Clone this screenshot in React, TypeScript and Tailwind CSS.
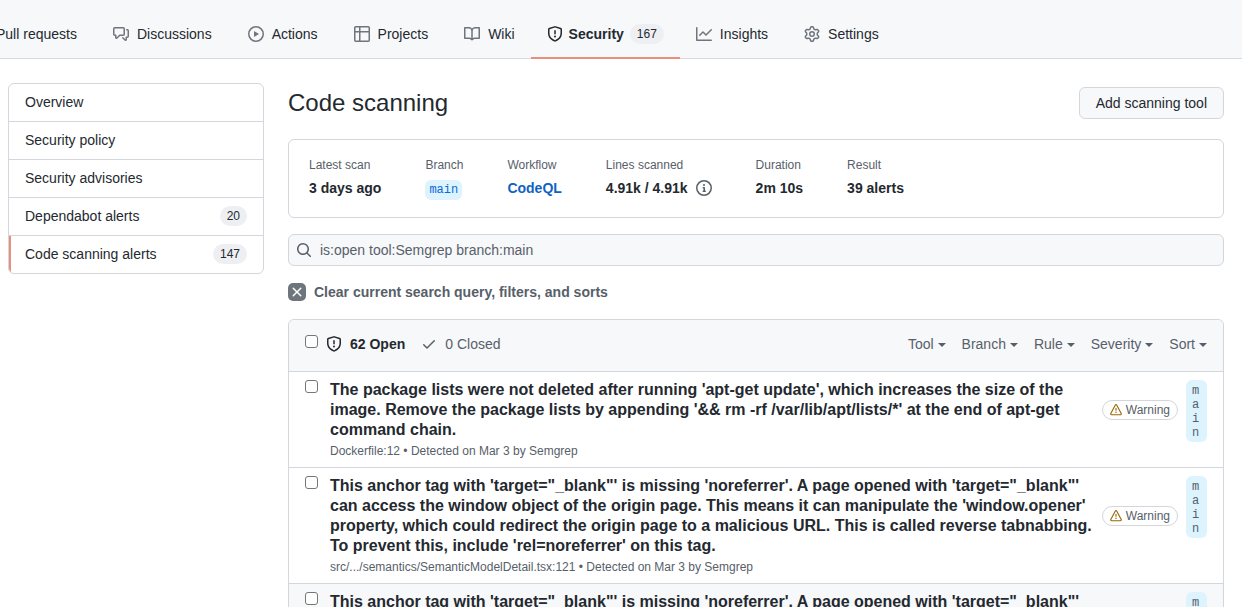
import React from "react";

const icons = {
  discussion:
    "M1.5 2.75a.25.25 0 01.25-.25h8.5a.25.25 0 01.25.25v5.5a.25.25 0 01-.25.25h-3.5a.75.75 0 00-.53.22L3.5 11.44V9.25a.75.75 0 00-.75-.75h-1a.25.25 0 01-.25-.25v-5.5zM1.75 1A1.75 1.75 0 000 2.75v5.5C0 9.216.784 10 1.75 10H2v1.543a1.457 1.457 0 002.487 1.03L7.061 10h3.189A1.75 1.75 0 0012 8.25v-5.5A1.75 1.75 0 0010.25 1h-8.5zM14.5 4.75a.25.25 0 00-.25-.25h-.5a.75.75 0 110-1.5h.5c.966 0 1.75.784 1.75 1.75v5.5A1.75 1.75 0 0114.25 12H14v1.543a1.457 1.457 0 01-2.487 1.03L9.22 12.28a.75.75 0 111.06-1.06l2.22 2.22v-2.19a.75.75 0 01.75-.75h1a.25.25 0 00.25-.25v-5.5z",
  play: "M1.5 8a6.5 6.5 0 1113 0 6.5 6.5 0 01-13 0zM8 0a8 8 0 100 16A8 8 0 008 0zM6.379 5.227A.25.25 0 006 5.442v5.117a.25.25 0 00.379.214l4.264-2.559a.25.25 0 000-.428L6.379 5.227z",
  project:
    "M0 1.75C0 .784.784 0 1.75 0h12.5C15.216 0 16 .784 16 1.75v3.585a.746.746 0 010 .83v8.085A1.75 1.75 0 0114.25 16H6.309a.748.748 0 01-1.118 0H1.75A1.75 1.75 0 010 14.25V6.165a.746.746 0 010-.83V1.75zM1.5 6.5v7.75c0 .138.112.25.25.25H5v-8H1.5zM5 5H1.5V1.75a.25.25 0 01.25-.25H5V5zm1.5 1.5v8h7.75a.25.25 0 00.25-.25V6.5h-8zm8-1.5h-8V1.5h7.75a.25.25 0 01.25.25V5z",
  book: "M0 1.75A.75.75 0 01.75 1h4.253c1.227 0 2.317.59 3 1.501A3.744 3.744 0 0111.006 1h4.245a.75.75 0 01.75.75v10.5a.75.75 0 01-.75.75h-4.507a2.25 2.25 0 00-1.591.659l-.622.621a.75.75 0 01-1.06 0l-.622-.621A2.25 2.25 0 005.258 13H.75a.75.75 0 01-.75-.75V1.75zm8.755 3a2.25 2.25 0 012.25-2.25H14.5v9h-3.757c-.71 0-1.4.201-1.992.572l.004-7.322zm-1.504 7.324l.004-5.073-.002-2.253A2.25 2.25 0 005.003 2.5H1.5v9h3.757a3.75 3.75 0 011.994.574z",
  shield:
    "M7.467.133a1.75 1.75 0 011.066 0l5.25 1.68A1.75 1.75 0 0115 3.48V7c0 1.566-.32 3.182-1.303 4.682-.983 1.498-2.585 2.813-5.032 3.855a1.7 1.7 0 01-1.33 0c-2.447-1.042-4.049-2.357-5.032-3.855C1.32 10.182 1 8.566 1 7V3.48a1.75 1.75 0 011.217-1.667l5.25-1.68zm.61 1.429a.25.25 0 00-.153 0l-5.25 1.68a.25.25 0 00-.174.238V7c0 1.358.275 2.666 1.057 3.86.784 1.194 2.121 2.34 4.366 3.297a.2.2 0 00.154 0c2.245-.956 3.582-2.104 4.366-3.298C13.225 9.666 13.5 8.36 13.5 7V3.48a.25.25 0 00-.174-.237l-5.25-1.68zM9 10.5a1 1 0 11-2 0 1 1 0 012 0zm-.25-5.75a.75.75 0 10-1.5 0v3a.75.75 0 001.5 0v-3z",
  graph:
    "M1.5 1.75a.75.75 0 00-1.5 0v12.5c0 .414.336.75.75.75h14.5a.75.75 0 000-1.5H1.5V1.75zm14.28 2.53a.75.75 0 00-1.06-1.06L10 7.94 7.53 5.47a.75.75 0 00-1.06 0L3.22 8.72a.75.75 0 001.06 1.06L7 7.06l2.47 2.47a.75.75 0 001.06 0l5.25-5.25z",
  gear: "M7.429 1.525a6.593 6.593 0 011.142 0c.036.003.108.036.137.146l.289 1.105c.147.56.55.967.997 1.189.174.086.341.183.501.29.417.278.97.423 1.53.27l1.102-.303c.11-.03.175.016.195.046.219.31.41.641.573.989.014.031.022.11-.059.19l-.815.806c-.411.406-.562.957-.53 1.456a4.588 4.588 0 010 .582c-.032.499.119 1.05.53 1.456l.815.806c.08.08.073.159.059.19a6.494 6.494 0 01-.573.99c-.02.029-.086.074-.195.045l-1.103-.303c-.559-.153-1.112-.008-1.529.27-.16.107-.327.204-.5.29-.449.222-.851.628-.998 1.189l-.289 1.105c-.029.11-.101.143-.137.146a6.613 6.613 0 01-1.142 0c-.036-.003-.108-.037-.137-.146l-.289-1.105c-.147-.56-.55-.967-.997-1.189a4.502 4.502 0 01-.501-.29c-.417-.278-.97-.423-1.53-.27l-1.102.303c-.11.03-.175-.016-.195-.046a6.492 6.492 0 01-.573-.989c-.014-.031-.022-.11.059-.19l.815-.806c.411-.406.562-.957.53-1.456a4.587 4.587 0 010-.582c.032-.499-.119-1.05-.53-1.456l-.815-.806c-.08-.08-.073-.159-.059-.19a6.44 6.44 0 01.573-.99c.02-.029.086-.075.195-.045l1.103.303c.559.153 1.112.008 1.529-.27.16-.107.327-.204.5-.29.449-.222.851-.628.998-1.189l.289-1.105c.029-.11.101-.143.137-.146zM8 0c-.236 0-.47.01-.701.03-.743.065-1.29.615-1.458 1.261l-.29 1.106c-.017.066-.078.158-.211.224a5.994 5.994 0 00-.668.386c-.123.082-.233.09-.3.071L3.27 2.776c-.644-.177-1.392.02-1.82.63a7.977 7.977 0 00-.704 1.217c-.315.675-.111 1.422.363 1.891l.815.806c.05.048.098.147.088.294a6.084 6.084 0 000 .772c.01.147-.038.246-.088.294l-.815.806c-.474.469-.678 1.216-.363 1.891.2.428.436.835.704 1.218.428.609 1.176.806 1.82.63l1.103-.303c.066-.019.176-.011.299.071.213.143.436.272.668.386.133.066.194.158.212.224l.289 1.106c.169.646.715 1.196 1.458 1.26a8.094 8.094 0 001.402 0c.743-.064 1.29-.614 1.458-1.26l.29-1.106c.017-.066.078-.158.211-.224a5.98 5.98 0 00.668-.386c.123-.082.233-.09.3-.071l1.102.302c.644.177 1.392-.02 1.82-.63.268-.382.505-.789.704-1.217.315-.675.111-1.422-.364-1.891l-.814-.806c-.05-.048-.098-.147-.088-.294a6.1 6.1 0 000-.772c-.01-.147.039-.246.088-.294l.814-.806c.475-.469.679-1.216.364-1.891a7.992 7.992 0 00-.704-1.218c-.428-.609-1.176-.806-1.82-.63l-1.103.303c-.066.019-.176.011-.299-.071a5.991 5.991 0 00-.668-.386c-.133-.066-.194-.158-.212-.224L10.16 1.29C9.99.645 9.444.095 8.701.031A8.094 8.094 0 008 0zm1.5 8a1.5 1.5 0 11-3 0 1.5 1.5 0 013 0zM11 8a3 3 0 11-6 0 3 3 0 016 0z",
  info: "M8 1.5a6.5 6.5 0 100 13 6.5 6.5 0 000-13zM0 8a8 8 0 1116 0A8 8 0 010 8zm6.5-.25A.75.75 0 017.25 7h1a.75.75 0 01.75.75v2.75h.25a.75.75 0 010 1.5h-2a.75.75 0 010-1.5h.25v-2h-.25a.75.75 0 01-.75-.75zM8 6a1 1 0 100-2 1 1 0 000 2z",
  search:
    "M11.5 7a4.499 4.499 0 11-8.998 0A4.499 4.499 0 0111.5 7zm-.82 4.74a6 6 0 111.06-1.06l3.04 3.04a.75.75 0 11-1.06 1.06l-3.04-3.04z",
  x: "M3.72 3.72a.75.75 0 011.06 0L8 6.94l3.22-3.22a.75.75 0 111.06 1.06L9.06 8l3.22 3.22a.75.75 0 11-1.06 1.06L8 9.06l-3.22 3.22a.75.75 0 01-1.06-1.06L6.94 8 3.72 4.78a.75.75 0 010-1.06z",
  check:
    "M13.78 4.22a.75.75 0 010 1.06l-7.25 7.25a.75.75 0 01-1.06 0L2.22 9.28a.75.75 0 011.06-1.06L6 10.94l6.72-6.72a.75.75 0 011.06 0z",
  alert:
    "M8.22 1.754a.25.25 0 00-.44 0L1.698 13.132a.25.25 0 00.22.368h12.164a.25.25 0 00.22-.368L8.22 1.754zm-1.763-.707c.659-1.234 2.427-1.234 3.086 0l6.082 11.378A1.75 1.75 0 0114.082 15H1.918a1.75 1.75 0 01-1.543-2.575L6.457 1.047zM9 11a1 1 0 11-2 0 1 1 0 012 0zm-.25-5.25a.75.75 0 00-1.5 0v2.5a.75.75 0 001.5 0v-2.5z",
};

type IconName = keyof typeof icons;

function Icon({ name, className = "size-4" }: { name: IconName; className?: string }) {
  return (
    <svg viewBox="0 0 16 16" fill="currentColor" fillRule="evenodd" aria-hidden="true" className={`shrink-0 ${className}`}>
      <path d={icons[name]} />
    </svg>
  );
}

function Counter({ children }: { children: React.ReactNode }) {
  return (
    <span className="rounded-full bg-[#eeeff2] px-[7px] text-xs leading-5 font-normal text-[#24292f]">{children}</span>
  );
}

const tabs: { label: string; icon?: IconName; count?: number }[] = [
  { label: "Pull requests" },
  { label: "Discussions", icon: "discussion" },
  { label: "Actions", icon: "play" },
  { label: "Projects", icon: "project" },
  { label: "Wiki", icon: "book" },
  { label: "Security", icon: "shield", count: 167 },
  { label: "Insights", icon: "graph" },
  { label: "Settings", icon: "gear" },
];

function RepoNav() {
  return (
    <header className="border-b border-[#d8dbe0] bg-[#f7f8fa] pt-[11px]">
      <nav aria-label="Repository" className="-mb-px -ml-5 flex gap-1">
        {tabs.map((t) => (
          <a
            key={t.label}
            href="#"
            aria-current={t.count ? "page" : undefined}
            className={`flex h-12 shrink-0 items-center border-b-2 px-4 whitespace-nowrap ${
              t.count ? "-mx-1 gap-1.5 border-b-[#e8907a] font-bold" : "gap-2 border-b-transparent"
            }`}
          >
            {t.icon && <Icon name={t.icon} className={t.count ? "size-4" : "size-4 text-[#6e757d]"} />}
            <span>{t.label}</span>
            {t.count && <Counter>{t.count}</Counter>}
          </a>
        ))}
      </nav>
    </header>
  );
}

const sections: { label: string; count?: number; current?: boolean }[] = [
  { label: "Overview" },
  { label: "Security policy" },
  { label: "Security advisories" },
  { label: "Dependabot alerts", count: 20 },
  { label: "Code scanning alerts", count: 147, current: true },
];

function Sidebar() {
  return (
    <nav
      aria-label="Security"
      className="w-64 shrink-0 divide-y divide-[#d3d6dc] overflow-hidden rounded-md border border-[#d3d6dc]"
    >
      {sections.map((s) => (
        <a
          key={s.label}
          href="#"
          aria-current={s.current ? "page" : undefined}
          className={`flex items-start justify-between py-2 pr-4 leading-[21px] ${
            s.current ? "border-l-2 border-l-[#e8907a] pl-3.5" : "pl-4"
          }`}
        >
          {s.label}
          {s.count && <Counter>{s.count}</Counter>}
        </a>
      ))}
    </nav>
  );
}

function Stat({ label, children }: { label: string; children: React.ReactNode }) {
  return (
    <div>
      <dt className="text-xs leading-[18px] text-[#57606a]">{label}</dt>
      <dd className="mt-1 flex h-5 items-center font-bold whitespace-nowrap">{children}</dd>
    </div>
  );
}

const anchorAlert = {
  title:
    "This anchor tag with 'target=\"_blank\"' is missing 'noreferrer'. A page opened with 'target=\"_blank\"' can access the window object of the origin page. This means it can manipulate the 'window.opener' property, which could redirect the origin page to a malicious URL. This is called reverse tabnabbing. To prevent this, include 'rel=noreferrer' on this tag.",
  meta: "src/.../semantics/SemanticModelDetail.tsx:121 • Detected on Mar 3 by Semgrep",
};

const alerts: { title: string; meta: string; highlighted?: boolean }[] = [
  {
    title:
      "The package lists were not deleted after running 'apt-get update', which increases the size of the image. Remove the package lists by appending '&& rm -rf /var/lib/apt/lists/*' at the end of apt-get command chain.",
    meta: "Dockerfile:12 • Detected on Mar 3 by Semgrep",
  },
  anchorAlert,
  { ...anchorAlert, highlighted: true },
];

const filters = ["Tool", "Branch", "Rule", "Severity", "Sort"];

const checkbox =
  "size-[13px] shrink-0 appearance-none rounded-[3px] border border-[#767676] bg-white checked:bg-[#0969da]";

function AlertList() {
  return (
    <section className="mt-[17px] rounded-t-md border border-[#d3d6dc]">
      <div className="flex h-[51px] items-center rounded-t-md bg-[#f7f8fa] px-4 pb-1">
        <input type="checkbox" aria-label="Select all alerts" className={`${checkbox} mb-1`} />
        <a href="#" className="ml-2 flex items-center gap-2 font-bold">
          <Icon name="shield" />
          62 Open
        </a>
        <a href="#" className="ml-4 flex items-center gap-2 text-[#57606a]">
          <Icon name="check" />0 Closed
        </a>
        <div className="ml-auto flex gap-4 text-[#57606a]">
          {filters.map((f) => (
            <button key={f} type="button" className="flex items-center gap-1">
              {f}
              <svg viewBox="0 0 8 4" fill="currentColor" aria-hidden="true" className="mt-0.5 h-1 w-2">
                <path d="M0 0h8L4 4z" />
              </svg>
            </button>
          ))}
        </div>
      </div>
      <ul>
        {alerts.map((a, i) => (
          <li
            key={i}
            className={`flex border-t border-[#d3d6dc] px-4 pt-2 pb-[7px] ${a.highlighted ? "bg-[#f7f8fa]" : ""}`}
          >
            <input type="checkbox" aria-label={`Select alert ${i + 1}`} className={checkbox} />
            <div className="ml-3 min-w-0 flex-1">
              <a href="#" className="block text-base leading-5 font-bold">
                {a.title}
              </a>
              <p className="mt-0.5 text-xs leading-[18px] text-[#57606a]">{a.meta}</p>
            </div>
            <span className="mb-5 ml-2 flex h-5 items-center gap-1 self-center rounded-full border border-[#d3d6dc] px-[7px] text-xs text-[#57606a]">
              <Icon name="alert" className="size-3 text-[#9a6700]" />
              Warning
            </span>
            <a
              href="#"
              className="ml-2 w-[21px] self-start rounded-md bg-[#ddf4ff] px-1.5 pt-1 pb-0.5 font-['Liberation_Mono',monospace] text-xs leading-[14px] break-all text-[#57606a]"
            >
              main
            </a>
          </li>
        ))}
      </ul>
    </section>
  );
}

export default function App() {
  return (
    <div className="h-screen overflow-hidden bg-white font-['Liberation_Sans',Arial,sans-serif] text-sm text-[#24292f]">
      <RepoNav />
      <div className="flex items-start gap-6 pt-6 pr-[18px] pl-2">
        <Sidebar />
        <main className="min-w-0 flex-1">
          <div className="mt-1 flex items-center justify-between">
            <h1 className="text-2xl leading-8">Code scanning</h1>
            <button type="button" className="h-8 rounded-md border border-[#d3d6dc] bg-[#f6f8fa] px-4">
              Add scanning tool
            </button>
          </div>

          <dl className="mt-5 flex gap-11 rounded-md border border-[#d3d6dc] px-5 pt-4 pb-[19px]">
            <Stat label="Latest scan">3 days ago</Stat>
            <Stat label="Branch">
              <a
                href="#"
                className="mt-1 rounded-md bg-[#ddf4ff] px-1 font-['Liberation_Mono',monospace] text-xs leading-5 font-normal text-[#0969da]"
              >
                main
              </a>
            </Stat>
            <Stat label="Workflow">
              <a href="#" className="text-[#0f62c4]">
                CodeQL
              </a>
            </Stat>
            <Stat label="Lines scanned">
              4.91k / 4.91k
              <button type="button" aria-label="About lines scanned" className="ml-2 text-[#57606a]">
                <Icon name="info" />
              </button>
            </Stat>
            <Stat label="Duration">2m 10s</Stat>
            <Stat label="Result">39 alerts</Stat>
          </dl>

          <label className="mt-4 flex h-8 items-center gap-2 rounded-md border border-[#d3d6dc] bg-[#f7f8fa] px-[7px] text-[#57606a]">
            <Icon name="search" />
            <input
              type="text"
              aria-label="Search alerts"
              defaultValue="is:open tool:Semgrep branch:main"
              className="min-w-0 flex-1 bg-transparent outline-none"
            />
          </label>

          <a href="#" className="mt-4 flex items-center gap-2 font-bold text-[#57606a]">
            <span className="flex size-[18px] items-center justify-center rounded-[5px] bg-[#6e757d] text-white">
              <Icon name="x" />
            </span>
            Clear current search query, filters, and sorts
          </a>

          <AlertList />
        </main>
      </div>
    </div>
  );
}
